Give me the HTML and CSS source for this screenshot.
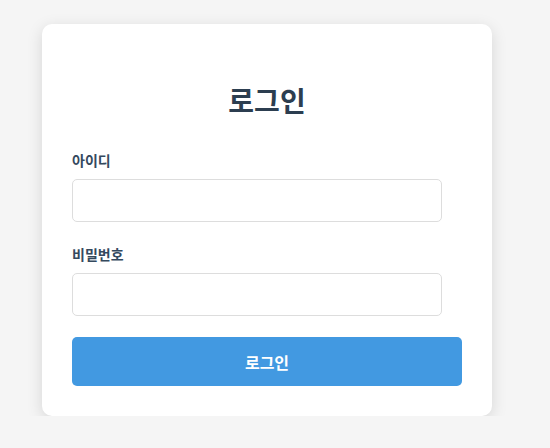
FILE: index.html
```html
<!DOCTYPE html>
<html lang="ko">
<head>
    <meta charset="UTF-8">
    <meta name="viewport" content="width=device-width, initial-scale=1.0">
    <title>로그인</title>
    <link rel="stylesheet" href="styles.css">
</head>
<body>

    <div class="login-container">
        <h2>로그인</h2>

        <form class="login-form" onsubmit="return false;">
            <div class="form-group">
                <label for="userId">아이디</label>
                <input type="text" id="userId">
            </div>
            <div class="form-group">
                <label for="password">비밀번호</label>
                <input type="password" id="password">
            </div>
            <button type="submit">로그인</button>
        </form>
    </div>

</body>
</html>
```

FILE: styles.css
```css
body {
    margin: 0;
    padding: 24px 0 0 42px;
    font-family: "Noto Sans CJK KR", "Noto Sans", sans-serif;
    background-color: #f5f5f5;
    color: #2c3e50;
}

.login-container {
    width: 450px;
    box-sizing: border-box;
    padding: 30px;
    background: #ffffff;
    border-radius: 10px;
    box-shadow: 0 4px 16px rgba(0, 0, 0, 0.13);
}

h2 {
    margin: 26px 0 30px;
    font-size: 28px;
    line-height: 40px;
    text-align: center;
    color: #2c3e50;
}

.form-group {
    margin-bottom: 22px;
}

.form-group:last-of-type {
    margin-bottom: 21px;
}

label {
    display: block;
    margin-bottom: 9px;
    font-size: 14px;
    line-height: 20px;
    font-weight: bold;
    color: #34495e;
}

input {
    display: block;
    width: calc(100% - 20px);
    height: 43px;
    box-sizing: border-box;
    padding: 10px;
    font-size: 14px;
    border: 1px solid #dddddd;
    border-radius: 5px;
    outline: none;
}

button {
    display: block;
    width: 100%;
    height: 49px;
    border: none;
    border-radius: 5px;
    background-color: #4299e1;
    color: #ffffff;
    font-family: inherit;
    font-size: 16px;
    font-weight: bold;
    cursor: pointer;
}

button:hover {
    background-color: #3182ce;
}
```
